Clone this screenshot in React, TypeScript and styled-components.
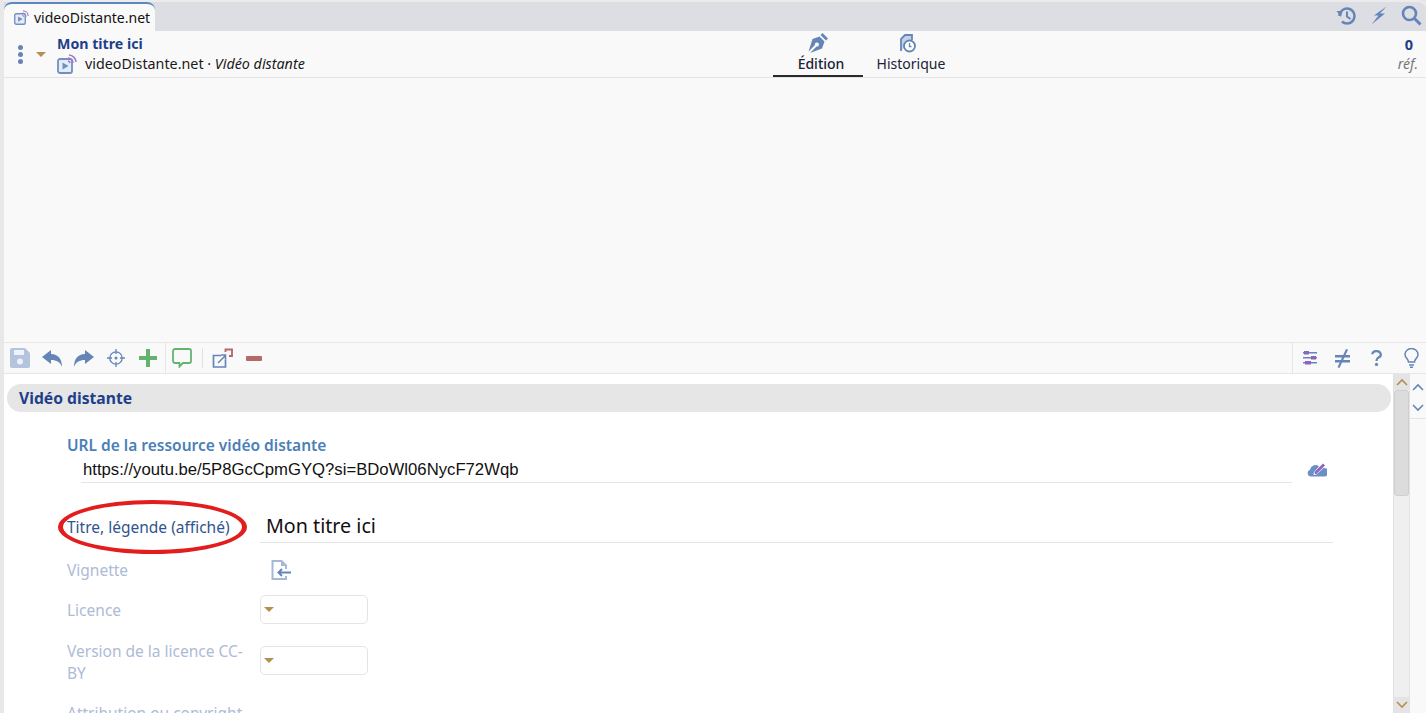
import React, { FC } from "react";
import styled, { createGlobalStyle } from "styled-components";

const Global = createGlobalStyle`
  html, body { margin: 0; padding: 0; background: #f0f0f0; }
  body { font-family: "Noto Sans", "Open Sans", sans-serif; }
`;

const Page = styled.div`
  width: 1426px;
  height: 713px;
  padding-left: 4px;
  box-sizing: border-box;
  background: #e8e8e8;
  display: flex;
  flex-direction: column;
  overflow: hidden;
`;

const TabBar = styled.div`
  height: 31px;
  flex: none;
  background: #dcdee3;
  display: flex;
  justify-content: space-between;
  box-shadow: inset 0 2px 0 #ececec;
  border-top-right-radius: 8px;
`;

const Tab = styled.div`
  width: 151px;
  box-sizing: border-box;
  margin-top: 2px;
  background: #f9f9f9;
  border-top: 2px solid #5e86c0;
  border-radius: 8px 8px 0 0;
  display: flex;
  align-items: center;
  padding-left: 10px;
  gap: 5px;
  font-size: 14px;
  color: #111;
`;

const TopIcons = styled.div`
  display: flex;
  align-items: center;
  gap: 14px;
  padding-right: 4px;
`;

const Header = styled.div`
  height: 47px;
  flex: none;
  box-sizing: border-box;
  background: #f9f9f9;
  border-bottom: 1px solid #e4e4e4;
  display: grid;
  grid-template-columns: 53px 716px 180px 1fr;
`;

const HeaderLeft = styled.div`
  display: flex;
  align-items: center;
  gap: 13px;
  padding-left: 14px;
  padding-top: 1px;
`;

const Dots = styled.div`
  display: flex;
  flex-direction: column;
  gap: 2px;
  span {
    width: 5px;
    height: 5px;
    border-radius: 50%;
    background: #6585b8;
  }
`;

const Caret = styled.div`
  width: 0;
  height: 0;
  border-left: 5px solid transparent;
  border-right: 5px solid transparent;
  border-top: 5px solid #b58f4f;
`;

const TitleBlock = styled.div`
  padding-top: 3px;
`;

const DocTitle = styled.div`
  font-size: 14.2px;
  font-weight: 700;
  line-height: 19px;
  color: #1e3f8a;
`;

const DocLine = styled.div`
  display: flex;
  align-items: center;
  gap: 8px;
  font-size: 14.3px;
  line-height: 21px;
  color: #1a1a1a;
  em { font-style: italic; }
`;

const Views = styled.div`
  display: flex;
`;

const View = styled.div<{ $active?: boolean }>`
  width: 90px;
  height: 46px;
  box-sizing: border-box;
  display: flex;
  flex-direction: column;
  align-items: center;
  justify-content: flex-end;
  padding-bottom: 1px;
  font-size: 14px;
  line-height: 20px;
  color: #1a2238;
  font-weight: ${(p) => (p.$active ? 500 : 400)};
  border-bottom: 2px solid ${(p) => (p.$active ? "#2b2b2b" : "transparent")};
  svg { flex: none; }
`;

const ViewLabel = styled.span`
  padding-left: 6px;
`;

const Counter = styled.div`
  text-align: right;
  padding: 3px 8px 0 0;
  font-size: 14px;
  line-height: 20px;
  b { display: block; color: #1e3f8a; font-size: 14.5px; padding-right: 5px; }
  i { display: block; color: #777; }
`;

const Empty = styled.div`
  flex: 1;
  background: #f9f9f9;
`;

const Toolbar = styled.div`
  height: 32px;
  flex: none;
  box-sizing: border-box;
  background: #f9f9f9;
  border-top: 1px solid #e6e6e6;
  border-bottom: 1px solid #e6e6e6;
  display: flex;
  justify-content: space-between;
`;

const ToolGroup = styled.div`
  display: flex;
  align-items: center;
`;

const Tools = styled.div<{ $divider?: boolean; $gap: number; $pad: string }>`
  height: 100%;
  display: flex;
  align-items: center;
  gap: ${(p) => p.$gap}px;
  padding: ${(p) => p.$pad};
  box-sizing: border-box;
  ${(p) => (p.$divider ? "border-left: 1px solid #e6e6e6;" : "")}
`;

const Sep = styled.div`
  width: 1px;
  height: 20px;
  background: #e2e2e2;
  margin: 0 9px 0 10px;
`;

const SpacedIcon = styled.svg<{ $ml: number }>`
  margin-left: ${(p) => p.$ml}px;
`;

const Body = styled.div`
  height: 339px;
  flex: none;
  display: flex;
  background: #fff;
`;

const Form = styled.div`
  position: relative;
  width: 1389px;
  flex: none;
  overflow: hidden;
  padding-top: 10px;
  box-sizing: border-box;
`;

const SectionHead = styled.div`
  margin-left: 3px;
  width: 1384px;
  height: 28px;
  box-sizing: border-box;
  border-radius: 14px;
  background: #e6e6e6;
  padding-left: 12px;
  font-size: 15.7px;
  font-weight: 700;
  line-height: 28px;
  color: #1e3f8a;
`;

const UrlBlock = styled.div`
  margin: 22px 0 0 63px;
  display: flex;
  flex-direction: column;
`;

const UrlLabel = styled.div`
  font-size: 15.5px;
  font-weight: 600;
  line-height: 22px;
  color: #4a7fb8;
`;

const UrlRow = styled.div`
  display: flex;
  align-items: center;
`;

const UrlInput = styled.div`
  width: 1211px;
  height: 27px;
  box-sizing: border-box;
  margin-left: 14px;
  padding-left: 2px;
  border-bottom: 1px solid #e4e4e4;
  font-family: "Liberation Sans", Arial, sans-serif;
  font-size: 16.7px;
  line-height: 28px;
  color: #111;
`;

const UrlEdit = styled.div`
  margin-left: 15px;
  display: flex;
`;

const Field = styled.div<{ $h: number; $top: number; $start?: boolean }>`
  display: grid;
  grid-template-columns: 193px 1fr;
  align-items: ${(p) => (p.$start ? "start" : "center")};
  margin: ${(p) => p.$top}px 0 0 63px;
  min-height: ${(p) => p.$h}px;
`;

const Label = styled.div<{ $on?: boolean }>`
  font-size: 15.5px;
  line-height: 22px;
  color: ${(p) => (p.$on ? "#2f5590" : "#aebbd6")};
`;

const TitleInput = styled.div`
  width: 1073px;
  height: 33px;
  box-sizing: border-box;
  border-bottom: 1px solid #e4e4e4;
  padding-left: 6px;
  font-size: 19.7px;
  line-height: 31px;
  color: #111;
`;

const SelectBox = styled.div<{ $drop?: number }>`
  width: 108px;
  height: 29px;
  margin-top: ${(p) => p.$drop ?? 0}px;
  box-sizing: border-box;
  border: 1px solid #e4e4e4;
  border-radius: 5px;
  background: #fff;
  display: flex;
  align-items: center;
  padding-left: 3px;
`;

const ThumbIcon = styled.div`
  padding-left: 11px;
  display: flex;
`;

const Oval = styled.div`
  position: absolute;
  left: 54px;
  top: 126px;
  width: 189px;
  height: 54px;
  box-sizing: border-box;
  border: solid #e31c1c;
  border-width: 4px 5px;
  border-radius: 50%;
`;

const Scroll = styled.div`
  width: 17px;
  flex: none;
  background: #efefef;
  border-left: 1px solid #e2e2e2;
  border-right: 1px solid #e2e2e2;
  box-sizing: border-box;
  display: flex;
  flex-direction: column;
`;

const ScrollBtn = styled.div`
  height: 16px;
  flex: none;
  background: #e4e4e4;
  display: flex;
  align-items: center;
  justify-content: center;
`;

const Thumb = styled.div`
  height: 106px;
  flex: none;
  background: #dcdcdc;
  border: 1px solid #cfcfcf;
  border-radius: 3px;
  box-sizing: border-box;
`;

const ScrollFill = styled.div`
  flex: 1;
`;

const Gutter = styled.div`
  flex: 1;
  background: #f9f9f9;
`;

const GutterNav = styled.div`
  height: 45px;
  box-sizing: border-box;
  border-bottom: 1px solid #e4e4e4;
  display: flex;
  flex-direction: column;
  align-items: center;
  gap: 13px;
  padding-top: 9px;
`;

const Remote: FC<{ size: number }> = ({ size }) => (
  <svg width={size} height={size} viewBox="0 0 20 20" fill="none">
    <rect x="1" y="5" width="14" height="14" rx="2" fill="#e6ecf6" stroke="#6e90c4" strokeWidth="1.8" />
    <path d="M5.500 8.500v7l6-3.500z" fill="#6e90c4" />
    <path d="M11 4a5 5 0 0 1 5 5M12 1a7.500 7.500 0 0 1 7 7M11 7a2.500 2.500 0 0 1 2 2" stroke="#a07cc8" strokeWidth="1.6" />
  </svg>
);

const Chevron: FC<{ up?: boolean; color: string }> = ({ up, color }) => (
  <svg width="12" height="8" viewBox="0 0 12 8" fill="none">
    <path d={up ? "M1 7l5-5 5 5" : "M1 1l5 5 5-5"} stroke={color} strokeWidth="1.600" />
  </svg>
);

const App: FC = () => {
  return (
    <Page>
      <Global />
      <TabBar>
        <Tab>
          <Remote size={15} />
          videoDistante.net
        </Tab>
        <TopIcons>
          <svg width="21" height="20" viewBox="0 0 21 20" fill="none">
            <path d="M3.500 10a7.500 7.500 0 1 1 2.400 5.500" stroke="#6585b8" strokeWidth="2.400" />
            <path d="M0.500 5l6 0-1.500 6z" fill="#6585b8" />
            <path d="M11 5.500v5l3.500 2.500" stroke="#6585b8" strokeWidth="2" />
          </svg>
          <svg width="16" height="19" viewBox="0 0 16 19">
            <path d="M15.500 0.500L3 9.500h4.500L0.500 18.500 14 7.500H9z" fill="#6585b8" />
          </svg>
          <svg width="21" height="21" viewBox="0 0 21 21" fill="none">
            <circle cx="8.500" cy="8.500" r="6.500" stroke="#6585b8" strokeWidth="2.600" />
            <path d="M13.500 13.500l6 6" stroke="#6585b8" strokeWidth="3" />
          </svg>
        </TopIcons>
      </TabBar>

      <Header>
        <HeaderLeft>
          <Dots><span /><span /><span /></Dots>
          <Caret />
        </HeaderLeft>
        <TitleBlock>
          <DocTitle>Mon titre ici</DocTitle>
          <DocLine>
            <Remote size={20} />
            <span>videoDistante.net · <em>Vidéo distante</em></span>
          </DocLine>
        </TitleBlock>
        <Views>
          <View $active>
            <svg width="22" height="22" viewBox="0 0 22 22">
              <path d="M15.500 1l5.500 5.500-2 2L13.500 3z" fill="#6585b8" />
              <path d="M12.500 4.500l5 5-2.500 7L3 21l6.500-6.500a2 2 0 1 0-1.500-1.500L1.500 19.500 5.500 7z" fill="#6585b8" />
            </svg>
            <ViewLabel>Édition</ViewLabel>
          </View>
          <View>
            <svg width="18" height="21" viewBox="0 0 18 21" fill="none">
              <path d="M2 18V6l4-4h7v5" stroke="#6585b8" strokeWidth="1.800" fill="#c5d2e6" />
              <circle cx="10.500" cy="13" r="5.500" fill="#fff" stroke="#6585b8" strokeWidth="1.800" />
              <path d="M10.500 10v3.500h2" stroke="#6585b8" strokeWidth="1.300" />
            </svg>
            <ViewLabel>Historique</ViewLabel>
          </View>
        </Views>
        <Counter>
          <b>0</b>
          <i>réf.</i>
        </Counter>
      </Header>

      <Empty />

      <Toolbar>
        <ToolGroup>
          <Tools $gap={12} $pad="0 7px 0 6px">
            <svg width="20" height="20" viewBox="0 0 20 20">
              <path d="M2 0h13l5 5v13a2 2 0 0 1-2 2H2a2 2 0 0 1-2-2V2a2 2 0 0 1 2-2z" fill="#b4c4de" />
              <rect x="4" y="2" width="10" height="5" fill="#eef2f9" />
              <circle cx="10" cy="13.500" r="3" fill="#eef2f9" />
            </svg>
            <svg width="20" height="17" viewBox="0 0 20 17">
              <path d="M0 7l9-7v4c7 0 11 5 11 13-2-5-5-7-11-7v4z" fill="#6585b8" />
            </svg>
            <svg width="20" height="17" viewBox="0 0 20 17">
              <path d="M20 7l-9-7v4C4 4 0 9 0 17c2-5 5-7 11-7v4z" fill="#6585b8" />
            </svg>
            <svg width="20" height="18" viewBox="-1 0 20 18" fill="none" stroke="#6585b8" strokeWidth="1.300">
              <circle cx="9" cy="9" r="6.200" />
              <path d="M9 0v5M9 13v5M0 9h5M13 9h5" />
              <circle cx="9" cy="9" r="1.500" fill="#6585b8" stroke="none" />
            </svg>
            <svg width="20" height="18" viewBox="-1 0 20 18">
              <path d="M7 0h4v7h7v4h-7v7H7v-7H0V7h7z" fill="#63b36f" />
            </svg>
          </Tools>
          <Tools $divider $gap={0} $pad="0 0 0 6px">
            <svg width="20" height="20" viewBox="0 0 20 20" fill="none">
              <path d="M3 1h14a2 2 0 0 1 2 2v10a2 2 0 0 1-2 2h-6l-3.500 3.500V15H3a2 2 0 0 1-2-2V3a2 2 0 0 1 2-2z" stroke="#63b36f" strokeWidth="1.800" />
            </svg>
            <Sep />
            <svg width="21" height="20" viewBox="0 0 21 20" fill="none">
              <path d="M9 7.500H1.500v11.500h12v-7.500" stroke="#6585b8" strokeWidth="1.700" />
              <path d="M6 15l7-7M9 7h4.500v4.500" stroke="#6585b8" strokeWidth="1.500" />
              <path d="M13.500 4V1.500h6.500V8h-3" stroke="#b56a6a" strokeWidth="1.900" />
            </svg>
            <SpacedIcon $ml={13} width="16" height="5" viewBox="0 0 16 5">
              <rect width="16" height="5" rx="1" fill="#b56a6a" />
            </SpacedIcon>
          </Tools>
        </ToolGroup>
        <Tools $divider $gap={17} $pad="0 7px 0 9px">
          <svg width="16" height="16" viewBox="0 0 16 16">
            <rect x="1" y="2" width="14" height="1.500" fill="#6585b8" />
            <rect x="1" y="7" width="14" height="1.500" fill="#6585b8" />
            <rect x="1" y="12" width="14" height="1.500" fill="#6585b8" />
            <rect x="2" y="1" width="5" height="3.500" fill="#8f63c0" />
            <rect x="9" y="6" width="5" height="3.500" fill="#8f63c0" />
            <rect x="3" y="11" width="6" height="3.500" fill="#8f63c0" />
          </svg>
          <svg width="15" height="19" viewBox="0 0 15 19">
            <path d="M0 6h15v2.500H0zM0 11h15v2.500H0z" fill="#6585b8" />
            <path d="M11 0l2 .8L4.500 19l-2-.8z" fill="#6585b8" />
          </svg>
          <SpacedIcon $ml={3} width="13" height="17" viewBox="-1 0 15 20" fill="none">
            <path d="M1.500 5a5 4 0 1 1 7 4c-2 1-2 2-2 4" stroke="#6585b8" strokeWidth="2.600" />
            <circle cx="6.500" cy="17" r="1.900" fill="#6585b8" />
          </SpacedIcon>
          <SpacedIcon $ml={4} width="15" height="20" viewBox="0 0 15 20" fill="none">
            <path d="M4.500 14c0-3-3.500-4-3.500-7.500a6.500 6 0 0 1 13 0c0 3.500-3.500 4.500-3.500 7.500z" stroke="#6585b8" strokeWidth="1.500" />
            <path d="M5 17h5M6 19.300h3" stroke="#6585b8" strokeWidth="1.500" />
          </SpacedIcon>
        </Tools>
      </Toolbar>

      <Body>
        <Form>
          <SectionHead>Vidéo distante</SectionHead>
          <UrlBlock>
            <UrlLabel>URL de la ressource vidéo distante</UrlLabel>
            <UrlRow>
              <UrlInput>https://youtu.be/5P8GcCpmGYQ?si=BDoWl06NycF72Wqb</UrlInput>
              <UrlEdit>
                <svg width="20" height="15" viewBox="0 0 20 15">
                  <path d="M4 14.500a3.500 3.500 0 0 1-1-6.800A5.500 5.500 0 0 1 12 4.500l-5 5.500-.5 3 3-.5 7-6.500a3.500 3.500 0 0 1 1.500 8.500z" fill="#6a8fc8" />
                  <path d="M8 12l-.5-2 8.500-8.500 2 2-8.500 8.500z" fill="#8f63c0" />
                </svg>
              </UrlEdit>
            </UrlRow>
          </UrlBlock>
          <Field $h={33} $top={27}>
            <Label $on>Titre, légende (affiché)</Label>
            <TitleInput>Mon titre ici</TitleInput>
          </Field>
          <Field $h={22} $top={16}>
            <Label>Vignette</Label>
            <ThumbIcon>
              <svg width="20" height="20" viewBox="0 0 20 20" fill="none">
                <path d="M15 9V5.500L10.500 1H1.500v18H15v-3" stroke="#a4b8d8" strokeWidth="2" />
                <path d="M10 1v5h5z" fill="#a4b8d8" />
                <path d="M20 12.500H8M11 9l-3.500 3.500L11 16" stroke="#6585b8" strokeWidth="2" />
              </svg>
            </ThumbIcon>
          </Field>
          <Field $h={29} $top={14}>
            <Label>Licence</Label>
            <SelectBox><Caret /></SelectBox>
          </Field>
          <Field $h={44} $top={16} $start>
            <Label>Version de la licence CC-<br />BY</Label>
            <SelectBox $drop={6}><Caret /></SelectBox>
          </Field>
          <Field $h={22} $top={18}>
            <Label>Attribution ou copyright</Label>
          </Field>
          <Oval />
        </Form>
        <Scroll>
          <ScrollBtn><Chevron up color="#b58f4f" /></ScrollBtn>
          <Thumb />
          <ScrollFill />
          <ScrollBtn><Chevron color="#b58f4f" /></ScrollBtn>
        </Scroll>
        <Gutter>
          <GutterNav>
            <Chevron up color="#6585b8" />
            <Chevron color="#6585b8" />
          </GutterNav>
        </Gutter>
      </Body>
    </Page>
  );
};

export default App;
